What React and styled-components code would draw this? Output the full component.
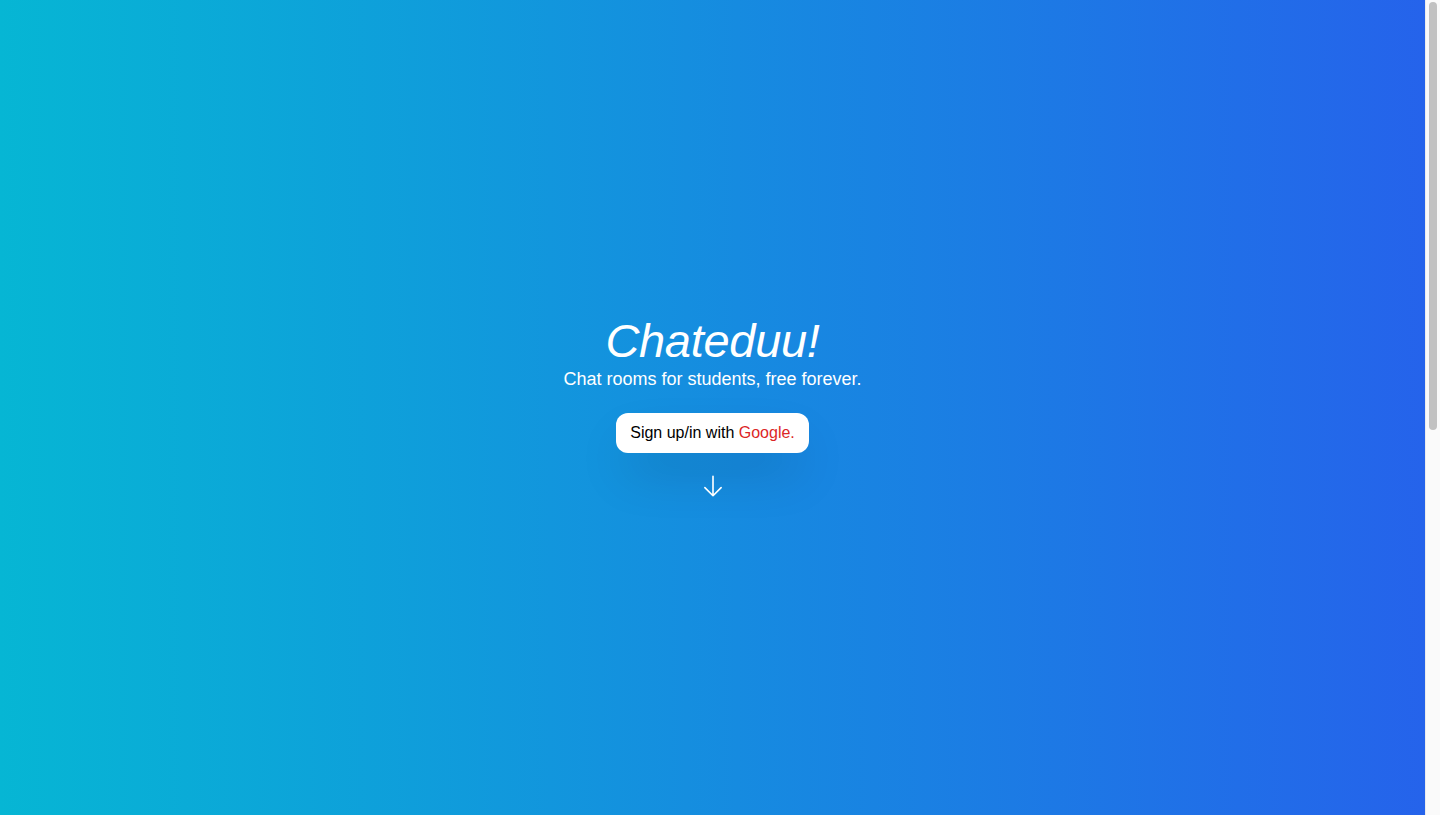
import React from 'react'
import styled, { createGlobalStyle } from 'styled-components'

const GlobalStyle = createGlobalStyle`
  html, body {
    margin: 0;
    padding: 0;
  }
  body {
    font-family: "Liberation Sans", Arial, sans-serif;
  }
`

const ArrowDown = () => (
  <svg width="26" height="26" viewBox="0 0 24 24" fill="none" stroke="currentColor" strokeWidth="1.5" strokeLinecap="round" strokeLinejoin="round">
    <path d="M19.5 13.5 12 21m0 0-7.5-7.5M12 21V3" />
  </svg>
)

const App = () => {
  return (
    <>
      <GlobalStyle />
      <Page>
        <Hero>
          <Title>Chateduu!</Title>
          <Tagline>Chat rooms for students, free forever.</Tagline>
          <SignInButton>
            Sign up/in with <Brand>Google.</Brand>
          </SignInButton>
          <ScrollHint>
            <ArrowDown />
          </ScrollHint>
        </Hero>
        <Below />
      </Page>
      <ScrollTrack>
        <ScrollThumb />
      </ScrollTrack>
    </>
  )
}

export default App

const Page = styled.div`
  margin-right: 15px;
  background: linear-gradient(to right, #06b6d4, #2563eb);
  color: white;
`

const Hero = styled.section`
  height: 100vh;
  display: flex;
  flex-direction: column;
  align-items: center;
  justify-content: center;
  text-align: center;
`

const Title = styled.h1`
  margin: 0;
  font-size: 47px;
  line-height: 48px;
  font-style: italic;
  font-weight: 400;
  letter-spacing: -0.3px;
`

const Tagline = styled.p`
  margin: 0;
  font-size: 18px;
  line-height: 28px;
`

const SignInButton = styled.button`
  margin-top: 20px;
  padding: 8px 14px;
  height: 40px;
  border: none;
  border-radius: 12px;
  background: white;
  color: black;
  font-family: "Liberation Sans", Arial, sans-serif;
  font-size: 16px;
  line-height: 24px;
  cursor: pointer;
  box-shadow: 0 25px 50px -12px rgba(0, 0, 0, 0.25);
`

const Brand = styled.span`
  color: #dc2626;
`

const ScrollHint = styled.div`
  margin-top: 20px;
  display: flex;
  color: white;
`

const Below = styled.section`
  height: 730px;
`

const ScrollTrack = styled.div`
  position: fixed;
  top: 0;
  right: 0;
  width: 15px;
  height: 100vh;
  box-sizing: border-box;
  background: #fafafa;
  border-left: 1px solid #ececec;
  padding: 2px 3px 0 3px;
`

const ScrollThumb = styled.div`
  width: 8px;
  height: 428px;
  border-radius: 4px;
  background: #c1c1c1;
`
